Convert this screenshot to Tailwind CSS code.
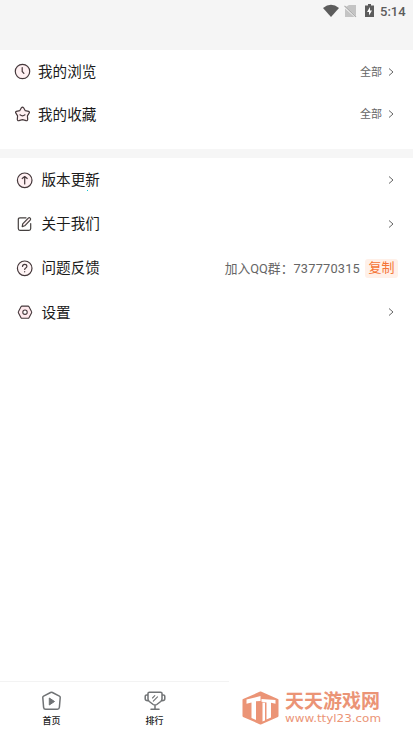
<!DOCTYPE html>
<html lang="zh-CN">
<head>
<meta charset="utf-8">
<meta name="viewport" content="width=device-width, initial-scale=1">
<title>我的</title>
<script src="https://cdn.jsdelivr.net/npm/@tailwindcss/browser@4"></script>
</head>
<body class="flex h-screen flex-col overflow-hidden bg-white font-[Roboto,'Noto_Sans_CJK_SC',sans-serif] text-[#1c1c1c]">
<header class="flex h-[50px] shrink-0 items-start justify-end bg-[#f5f5f5] pr-[8px] text-[#5c5c5c]">
  <svg class="mt-[4px] h-[14px] w-[16px]" viewBox="0 0 16 14" fill="currentColor"><path d="M0 4Q8-2.5 16 4L8 13Z"/></svg>
  <svg class="mt-[4px] ml-[5px] h-[14px] w-[13px]" viewBox="0 0 13 14"><path d="M5 1h7v11L2 2.800Z" fill="#c4c4c4"/><path d="M1 4.500L10.500 13H1Z" fill="#c4c4c4"/><path d="M.5 1.800l11.500 11" stroke="#aaa" stroke-width="1.100"/></svg>
  <svg class="mt-[4px] ml-[8px] h-[14px] w-[9px]" viewBox="0 0 9 14"><path d="M3 0h3v1.500h3V13H0V1.500h3Z" fill="#5c5c5c"/><path d="M5 3L2 8h2v3.500L7 6.500H5Z" fill="#fff"/></svg>
  <span class="ml-[6px] mt-[4px] w-[25px] text-[13px]/[16px] font-medium whitespace-nowrap">5:14</span>
</header>

<main class="flex-1">
  <section class="h-[99px]">
    <div class="flex h-[43px] items-center pr-[19px] pl-[14px]">
      <svg class="h-[17px] w-[17px]" viewBox="0 0 17 17" fill="none" stroke="#45383b" stroke-width="1.200" stroke-linecap="round"><circle cx="8.500" cy="8.500" r="7.200" fill="#fff0f2"/><path d="M8.200 4.500v4l1.700 1.900"/></svg>
      <span class="ml-[7px] text-[14.600px]/[20px]">我的浏览</span>
      <span class="ml-auto pt-[2px] text-[11px]/[16px] text-[#666]">全部</span>
      <svg class="ml-[6px] h-[8px] w-[6px]" viewBox="0 0 6 8" fill="none" stroke="#666"><path d="M1 .5l4 3.500-4 3.500"/></svg>
    </div>
    <div class="flex h-[42px] items-center pr-[19px] pl-[14px]">
      <svg class="h-[17px] w-[17px]" viewBox="0 0 17 17" fill="none" stroke="#45383b" stroke-width="1.200" stroke-linejoin="round" stroke-linecap="round"><path d="M7.400 1.800Q8.500.4 9.600 1.800L11.300 4.700 14.600 5.400Q16 6 15.100 7.200L13.400 9.800 13.700 13.500Q13.500 15 12.100 14.700L8.500 13.700 4.900 14.700Q3.500 15 3.300 13.500L3.600 9.800 1.900 7.200Q1 6 2.400 5.400L5.700 4.700Z" fill="#fff0f2"/><path d="M6 8.800q2.500 2 5 0"/></svg>
      <span class="ml-[7px] pt-px text-[14.600px]/[20px]">我的收藏</span>
      <span class="ml-auto pt-px text-[11px]/[16px] text-[#666]">全部</span>
      <svg class="ml-[6px] h-[8px] w-[6px]" viewBox="0 0 6 8" fill="none" stroke="#666"><path d="M1 .5l4 3.500-4 3.500"/></svg>
    </div>
  </section>
  <div class="h-[9px] bg-[#f6f6f6]"></div>
  <section>
    <div class="flex h-[44px] items-center pr-[19px] pl-[16px]">
      <svg class="h-[17px] w-[17px]" viewBox="0 0 17 17" fill="none" stroke="#45383b" stroke-width="1.200" stroke-linecap="round" stroke-linejoin="round"><circle cx="8.700" cy="8.300" r="7.300" fill="#fff0f2"/><path d="M8.700 12V5M6.200 6.500L8.700 4.500 11.200 6.500"/></svg>
      <span class="relative ml-[8.500px] text-[14.600px]/[20px]">版本更新<i class="absolute top-[20px] left-[45px] size-px bg-[#18c5cf]"></i></span>
      <svg class="ml-auto h-[8px] w-[6px]" viewBox="0 0 6 8" fill="none" stroke="#666"><path d="M1 .5l4 3.500-4 3.500"/></svg>
    </div>
    <div class="flex h-[44px] items-center pr-[19px] pl-[16px]">
      <svg class="h-[17px] w-[17px]" viewBox="0 0 17 17" fill="none" stroke="#45403f" stroke-width="1.200" stroke-linecap="round" stroke-linejoin="round"><path d="M10 1.800H4Q2.300 1.800 2.300 3.600v9q0 1.800 1.700 1.800h9q1.700 0 1.700-1.800V7.600"/><path d="M6.200 10.600l.5-2.700L12.300 2.100q1-.8 1.900 0t0 2L8.700 9.800Z" fill="#fff0f2"/></svg>
      <span class="ml-[8.500px] text-[14.600px]/[20px]">关于我们</span>
      <svg class="ml-auto h-[8px] w-[6px]" viewBox="0 0 6 8" fill="none" stroke="#666"><path d="M1 .5l4 3.500-4 3.500"/></svg>
    </div>
    <div class="flex h-[44px] items-center pr-[15px] pl-[16px]">
      <svg class="h-[17px] w-[17px]" viewBox="0 0 17 17" fill="none" stroke="#45383b" stroke-width="1.200" stroke-linecap="round"><circle cx="8.700" cy="8.300" r="7.300" fill="#fff5f6"/><path d="M6.500 6.400q.1-2.100 2.200-2.100t2.200 1.900q0 1-1.200 1.800-1 .6-1 1.500M8.700 11.700v.1"/></svg>
      <span class="ml-[8.500px] text-[14.600px]/[20px]">问题反馈</span>
      <span class="ml-auto pt-px text-[12.800px]/[18px] whitespace-nowrap text-[#666]">加入QQ群：<span class="tracking-[.2px]">737770315</span></span>
      <span class="ml-[5px] flex h-[19px] w-[33px] items-center justify-center rounded-[3px] bg-[#fff0e8] text-[13px]/[18px] text-[#f57435]">复制</span>
    </div>
    <div class="flex h-[44px] items-center pr-[19px] pl-[16px]">
      <svg class="h-[17px] w-[17px]" viewBox="0 0 17 17" fill="none" stroke="#45383b" stroke-width="1.100" stroke-linejoin="round"><path d="M6 2.100h6q.7 0 1 .6l2.500 4.800q.4.700 0 1.400L13 13.700q-.3.600-1 .6H6q-.7 0-1-.6L2.500 8.900q-.4-.7 0-1.400L5 2.700q.3-.6 1-.6Z" fill="#ffe9ed"/><circle cx="9" cy="8.200" r="2.200" fill="#fff"/></svg>
      <span class="ml-[8.500px] pt-px text-[14.600px]/[20px]">设置</span>
      <svg class="ml-auto h-[8px] w-[6px]" viewBox="0 0 6 8" fill="none" stroke="#666"><path d="M1 .5l4 3.500-4 3.500"/></svg>
    </div>
  </section>
</main>

<footer class="flex h-[53px] shrink-0">
  <nav class="flex w-[229px] border-t border-[#f3f3f3]">
    <a class="flex w-[103px] flex-col items-center pt-[9px] text-[9px]/[12px] font-medium">
      <svg class="h-[20px] w-[20px]" viewBox="0 0 20 20" fill="none" stroke="#707375" stroke-width="1.500" stroke-linejoin="round"><path d="M8.600 1.500q.9-.5 1.800 0l7 3.700q.9.500.8 1.500l-.8 9.600q-.2 1.900-2 1.900H3.600q-1.800 0-2-1.900L.8 6.700q-.1-1 .8-1.500Z"/><path d="M7.300 7l5.200 3.500L7.300 14Z" fill="#707375" stroke-width="1"/></svg>
      <span class="mt-[4px]">首页</span>
    </a>
    <a class="flex w-[103px] flex-col items-center pt-[9px] text-[9px]/[12px] font-medium">
      <svg class="h-[20px] w-[22px]" viewBox="0 0 22 20" fill="none" stroke="#707375" stroke-width="1.500" stroke-linecap="round" stroke-linejoin="round"><path d="M4 2.300Q4 1.200 5.500 1.200h11q1.500 0 1.500 1.100V8q0 1.400-1.300 2.500l-3.900 3q-1.800 1.200-3.600 0l-3.900-3Q4 9.400 4 8ZM4 4Q1.200 3.500 1.200 5.500v2.200Q1.200 9.700 4 9.700M18 4Q20.800 3.500 20.800 5.500v2.200q0 2-2.800 2M11 14.500v3.700M7 18.300h8"/><path d="M8.500 7l2.300-2.300M9.300 10.200l4.200-4.400" stroke-width="1.100"/></svg>
      <span class="mt-[4px]">排行</span>
    </a>
  </nav>
  <div class="flex flex-1 items-start pt-[10px] pl-[13px] text-[#eb9476]">
    <svg class="h-[34px] w-[37px]" viewBox="0 0 37 34"><path d="M18.500 1.500L35.500 9v16L18.500 32.500 1.500 25V9Z" fill="#eb9476" stroke="#eb9476" stroke-width="2" stroke-linejoin="round"/><path d="M4.500 8.500L18.500 5v5l-4.500.2V29L9.500 27V11.500l-5 1.300ZM19.500 8L33.500 9v3.800l-4.500-1v14.700l-4.500 2V11.500l-5-.8Z" fill="#fff"/><path d="M20.500 11.500l2.500.3v17.700l-2.500 1Z" fill="#fff"/></svg>
    <div class="ml-[6px] flex flex-col">
      <span class="text-[19px]/[22px] font-bold whitespace-nowrap">天天游戏网</span>
      <svg class="mt-px h-[12px] w-[98px] overflow-visible" viewBox="0 0 98 12"><text x="0" y="7.500" textLength="96" lengthAdjust="spacingAndGlyphs" fill="#eb9476" font-family="'DejaVu Sans',sans-serif" font-size="10.500">www.ttyl23.com</text></svg>
    </div>
  </div>
</footer>
</body>
</html>
